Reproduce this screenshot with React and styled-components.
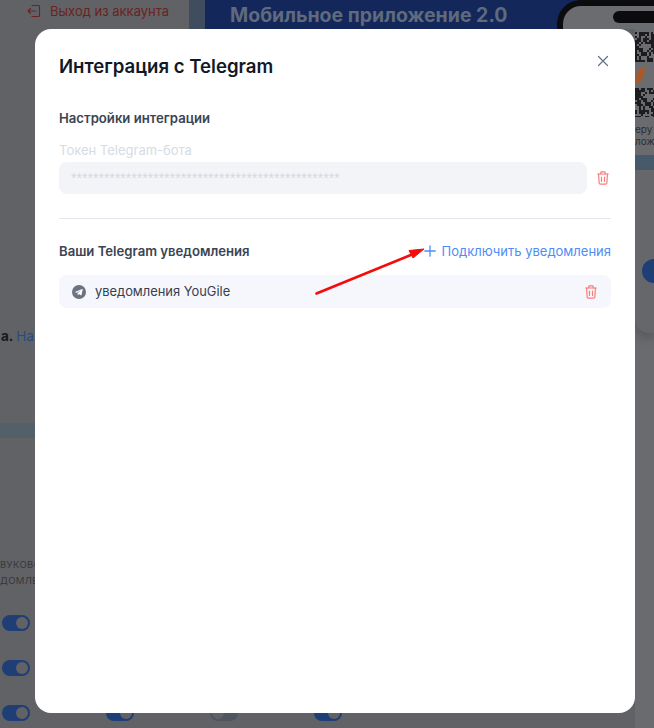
import React from "react";
import styled, { createGlobalStyle } from "styled-components";

const Global = createGlobalStyle`
  html, body { margin: 0; padding: 0; background: #616266; }
  #root { width: 654px; height: 728px; overflow: hidden; }
  * { box-sizing: border-box; }
`;

const Page = styled.div`
  position: relative;
  width: 654px;
  height: 728px;
  overflow: hidden;
  background: #616266;
  font-family: Inter, "Liberation Sans", sans-serif;
  display: flex;
  flex-direction: column;
`;

/* dimmed page behind the dialog */
const TopBar = styled.div`
  display: flex;
  height: 29px;
  flex: none;
`;
const LogoutLink = styled.div`
  width: 189px;
  flex: none;
  padding: 0 0 0 27px;
  display: flex;
  gap: 9px;
  align-items: center;
  height: 22px;
  font-size: 13px;
  color: #6a2320;
  white-space: nowrap;
`;
const BannerEdge = styled.div`
  width: 16px;
  flex: none;
  background: #3f4d5e;
`;
const Banner = styled.div`
  width: 352px;
  flex: none;
  background: #14275a;
  padding: 3px 0 0 25px;
  font-size: 19.5px;
  font-weight: 700;
  line-height: 24px;
  color: #5f6a7c;
  white-space: nowrap;
  overflow: hidden;
`;
const PhoneTop = styled.div`
  flex: 1;
  background: #14275a;
`;
const PhoneFrame = styled.div`
  height: 100%;
  border: 6px solid #0c0c0e;
  border-right: 0;
  border-bottom: 0;
  border-top-left-radius: 24px;
  background: #6b6c70;
  padding: 5px 0 0 50px;
`;
const Notch = styled.div`
  height: 12px;
  background: #0c0c0e;
  border-radius: 8px 0 0 8px;
`;
const Content = styled.div`
  flex: 1;
  display: flex;
  min-height: 0;
`;
const LeftStrip = styled.div`
  width: 35px;
  flex: none;
  display: flex;
  flex-direction: column;
  overflow: hidden;
`;
const DimNote = styled.div`
  margin-top: 298px;
  font-size: 13.5px;
  line-height: 18px;
  font-weight: 700;
  color: #17181c;
  white-space: nowrap;
  padding-left: 1px;
  & > span { font-weight: 400; color: #254a87; }
`;
const DimBand = styled.div`
  height: 15px;
  flex: none;
  margin-top: 78px;
  background: #535f69;
`;
const DimCaps = styled.div`
  margin-top: 119px;
  font-size: 9.5px;
  line-height: 16px;
  color: #36373c;
  letter-spacing: 0.4px;
  white-space: nowrap;
`;
const SwitchColumn = styled.div`
  margin-top: 26px;
  display: flex;
  flex-direction: column;
  gap: 29px;
  padding-left: 2px;
`;
const Switch = styled.div`
  width: 28px;
  height: 16px;
  flex: none;
  border-radius: 8px;
  background: ${(p) => (p.$on ? "#1f3e75" : "#4f565f")};
  display: flex;
  justify-content: ${(p) => (p.$on ? "flex-end" : "flex-start")};
  padding: 2px;
  &::after {
    content: "";
    width: 12px;
    height: 12px;
    border-radius: 50%;
    background: #616266;
  }
`;
const MidStrip = styled.div`
  flex: 1;
  display: flex;
  align-items: flex-end;
  padding: 0 0 7px 71px;
  gap: 76px;
`;
const RightStrip = styled.div`
  width: 19px;
  flex: none;
  display: flex;
  flex-direction: column;
  overflow: hidden;
  background: #6a6b6f;
`;
const QrBox = styled.svg`
  display: block;
  flex: none;
  width: 19px;
  height: 88px;
  background: #6b6c70;
`;
const DimCaption = styled.div`
  font-size: 10px;
  line-height: 12px;
  color: #2d2e32;
  white-space: nowrap;
  margin-top: 6px;
  height: 24px;
`;
const RightBand = styled.div`
  height: 15px;
  flex: none;
  margin-top: 8px;
  background: #475a6b;
`;
const RightCard = styled.div`
  height: 163px;
  flex: none;
  background: #66676b;
  border-bottom-left-radius: 14px;
  padding: 89px 0 0 7px;
  box-shadow: 0 6px 8px rgba(40, 40, 45, 0.25);
`;
const DimCircle = styled.div`
  width: 24px;
  height: 24px;
  border-radius: 50%;
  background: #1f3e75;
`;

/* dialog */
const Modal = styled.div`
  position: absolute;
  left: 35px;
  top: 29px;
  width: 600px;
  height: 684px;
  background: #fff;
  border-radius: 16px;
  padding: 24px;
  color: #374151;
`;
const Header = styled.div`
  display: flex;
  justify-content: space-between;
  align-items: flex-start;
  height: 55px;
`;
const Title = styled.h2`
  margin: 0;
  font-size: 18.6px;
  line-height: 26px;
  font-weight: 600;
  color: #111827;
`;
const CloseButton = styled.button`
  border: 0;
  background: none;
  padding: 0;
  margin: 0;
  display: flex;
  color: #64708a;
`;
const SectionTitle = styled.div`
  font-size: 13.15px;
  line-height: 20px;
  font-weight: 600;
  color: #3b4452;
`;
const FieldLabel = styled.div`
  margin-top: 12px;
  font-size: 13px;
  line-height: 20px;
  color: #d7dbe4;
`;
const FieldRow = styled.div`
  margin-top: 2px;
  display: flex;
  align-items: center;
  gap: 10px;
  padding-right: 2px;
`;
const TokenInput = styled.div`
  flex: 1;
  height: 32px;
  border-radius: 8px;
  background: #f3f4f8;
  padding: 0 12px;
  font-family: "Liberation Sans", sans-serif;
  font-size: 14.1px;
  line-height: 33px;
  color: #d5d8e0;
  overflow: hidden;
  white-space: nowrap;
`;
const IconSlot = styled.span`
  display: flex;
  flex: none;
  color: #fb7b7b;
`;
const Divider = styled.hr`
  border: 0;
  height: 1px;
  background: #e5e7ef;
  margin: 24px 0 22px;
`;
const SectionHead = styled.div`
  display: flex;
  justify-content: space-between;
  align-items: center;
  height: 20px;
`;
const ConnectLink = styled.div`
  display: flex;
  align-items: center;
  gap: 6px;
  font-size: 13px;
  color: #4f8cf6;
`;
const ChatRow = styled.div`
  margin-top: 14px;
  height: 33px;
  border-radius: 8px;
  background: #f6f7fc;
  display: flex;
  align-items: center;
  padding: 0 14px 0 13px;
  font-size: 12.9px;
  color: #374151;
`;
const ChatName = styled.span`
  margin-left: 9px;
  flex: 1;
`;
const ChatIcon = styled.svg`
  display: block;
  flex: none;
`;
const ArrowMark = styled.svg`
  position: absolute;
  left: 0;
  top: 0;
  width: 654px;
  height: 728px;
  pointer-events: none;
`;

const Trash = () => (
  <svg width="12" height="14" viewBox="0 0 12 14" fill="none" stroke="currentColor" strokeWidth="1.2" strokeLinecap="round" strokeLinejoin="round">
    <path d="M.7 3h10.6" />
    <path d="M3.8 3V1.6c0-.4.3-.8.8-.8h2.8c.5 0 .8.4.8.8V3" />
    <path d="M1.6 3l.5 8.8c0 .7.6 1.4 1.4 1.4h5c.8 0 1.4-.7 1.4-1.4L10.4 3" />
    <path d="M4.5 6v4.5M7.5 6v4.5" />
  </svg>
);

const qr = [];
let seed = 17;
for (let r = 0; r < 43; r++) {
  for (let c = 0; c < 10; c++) {
    seed = (seed * 137 + 59) % 1009;
    const y = 3 + r * 2;
    const blank = y > 31 && y < 58;
    if (seed % 5 < 3 && !blank) qr.push([c * 2, y]);
  }
}

export default function App() {
  return (
    <Page>
      <Global />
      <TopBar>
        <LogoutLink>
          <svg width="14" height="14" viewBox="0 0 14 14" fill="none" stroke="#6a2320" strokeWidth="1.1" strokeLinecap="round" strokeLinejoin="round">
            <path d="M5 1.5h6.5a1 1 0 0 1 1 1v9a1 1 0 0 1-1 1H5" />
            <path d="M9 7H1M3.5 4.5L1 7l2.5 2.5" />
          </svg>
          Выход из аккаунта
        </LogoutLink>
        <BannerEdge />
        <Banner>Мобильное приложение 2.0</Banner>
        <PhoneTop>
          <PhoneFrame>
            <Notch />
          </PhoneFrame>
        </PhoneTop>
      </TopBar>
      <Content>
        <LeftStrip>
          <DimNote>
            а. <span>На</span>
          </DimNote>
          <DimBand />
          <DimCaps>
            ВУКОВО
            <br />
            ДОМЛЕ
          </DimCaps>
          <SwitchColumn>
            <Switch $on />
            <Switch $on />
            <Switch $on />
          </SwitchColumn>
        </LeftStrip>
        <MidStrip>
          <Switch $on />
          <Switch />
          <Switch $on />
        </MidStrip>
        <RightStrip>
          <QrBox viewBox="0 0 19 88">
            {qr.map(([x, y]) => (
              <rect key={`${x}-${y}`} x={x} y={y} width="2" height="2" fill="#1c1c1f" />
            ))}
            <path d="M3 42c2-3 7-5 7-2 0 3-2 9-4 12-2 2-6 3-7 2z" fill="#a8592a" />
          </QrBox>
          <DimCaption>
            еру и
            <br />
            ложе
          </DimCaption>
          <RightBand />
          <RightCard>
            <DimCircle />
          </RightCard>
        </RightStrip>
      </Content>
      <Modal>
        <Header>
          <Title>Интеграция с Telegram</Title>
          <CloseButton aria-label="Закрыть">
            <svg width="16" height="16" viewBox="0 0 16 16" fill="none" stroke="currentColor" strokeWidth="1.2" strokeLinecap="round">
              <path d="M3.5 3.5l9 9M12.5 3.5l-9 9" />
            </svg>
          </CloseButton>
        </Header>
        <SectionTitle>Настройки интеграции</SectionTitle>
        <FieldLabel>Токен Telegram-бота</FieldLabel>
        <FieldRow>
          <TokenInput>*************************************************</TokenInput>
          <IconSlot>
            <Trash />
          </IconSlot>
        </FieldRow>
        <Divider />
        <SectionHead>
          <SectionTitle>Ваши Telegram уведомления</SectionTitle>
          <ConnectLink>
            <svg width="12" height="12" viewBox="0 0 12 12" fill="none" stroke="currentColor" strokeWidth="1.3" strokeLinecap="round">
              <path d="M6 .8v10.4M.8 6h10.4" />
            </svg>
            Подключить уведомления
          </ConnectLink>
        </SectionHead>
        <ChatRow>
          <ChatIcon width="14" height="14" viewBox="0 0 14 14">
            <circle cx="7" cy="7" r="7" fill="#6b7280" />
            <path d="M2.9 6.9l7.3-2.9c.4-.1.6.1.5.5L9.5 10c-.1.4-.4.5-.7.3L7 9l-.9.9c-.2.2-.4.1-.4-.1l-.2-1.6 3.1-2.8-3.9 2.4-1.6-.5c-.4-.1-.4-.3-.2-.4z" fill="#fff" />
          </ChatIcon>
          <ChatName>уведомления YouGile</ChatName>
          <IconSlot>
            <Trash />
          </IconSlot>
        </ChatRow>
      </Modal>
      <ArrowMark viewBox="0 0 654 728">
        <path d="M316.5 293.5L412 254.5" stroke="#f40c0c" strokeWidth="2.6" strokeLinecap="round" fill="none" />
        <path d="M424 249L409 250.5L413 258z" fill="#f40c0c" stroke="#f40c0c" strokeWidth="1" strokeLinejoin="round" />
      </ArrowMark>
    </Page>
  );
}
